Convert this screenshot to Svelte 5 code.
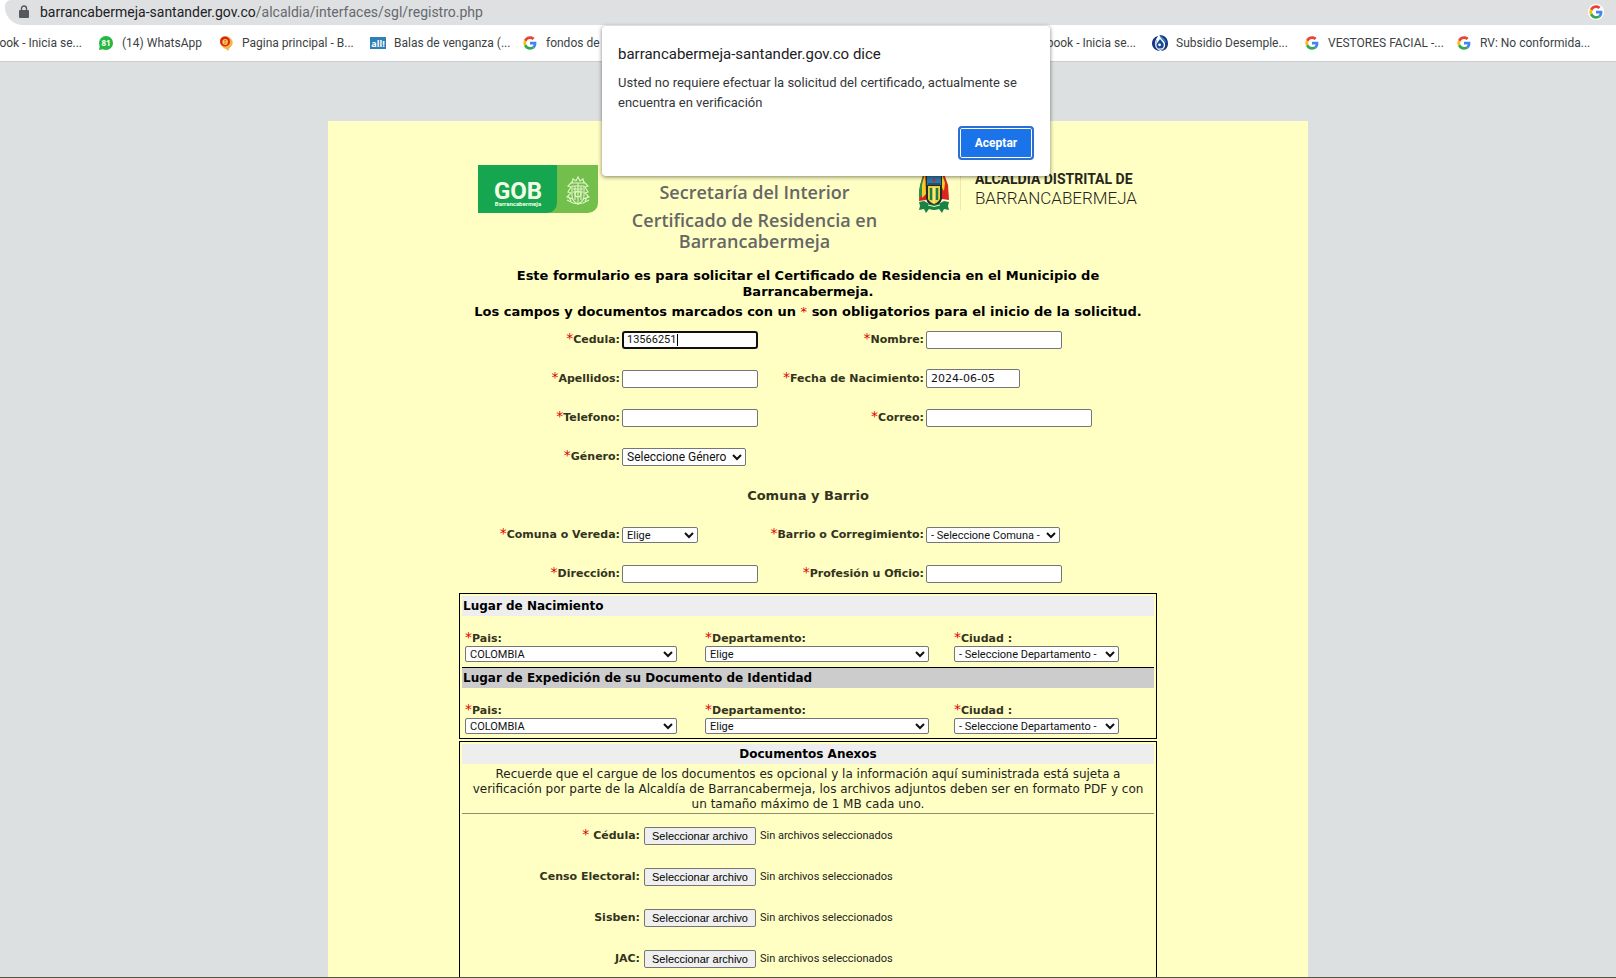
<script>
  const leftMarks = [
    { icon: 'whatsapp', text: '(14) WhatsApp', short: true },
    { icon: 'flame', text: 'Pagina principal - B...' },
    { icon: 'all', text: 'Balas de venganza (...' },
    { icon: 'google', text: 'fondos de', short: true }
  ];
  const rightMarks = [
    { icon: 'drop', text: 'Subsidio Desemple...' },
    { icon: 'google', text: 'VESTORES FACIAL -...' },
    { icon: 'google', text: 'RV: No conformida...' }
  ];
  const places = [
    { id: 'nac', title: 'Lugar de Nacimiento' },
    { id: 'exp', title: 'Lugar de Expedición de su Documento de Identidad' }
  ];
  const files = [
    { id: 'cedula', label: 'Cédula:', required: true },
    { id: 'censo', label: 'Censo Electoral:' },
    { id: 'sisben', label: 'Sisben:' },
    { id: 'jac', label: 'JAC:' }
  ];
  let cedula = $state('13566251');
  let fecha = $state('2024-06-05');
  let open = $state(true);
  let pickers = $state([]);
</script>

{#snippet google()}
  <svg class="icon" viewBox="0 0 48 48" aria-hidden="true">
    <path fill="#ea4335" d="M24 12c3 0 5.700 1 7.800 3l5.800-5.800C34 5.900 29.400 4 24 4 16.200 4 9.400 8.500 6.100 15l6.800 5.200C14.500 15.400 18.900 12 24 12z" />
    <path fill="#4285f4" d="M43.200 24.500c0-1.500-.1-2.900-.4-4.200H24v8.200h10.800c-.5 2.500-1.900 4.600-4 6l6.500 5c3.800-3.500 5.900-8.700 5.900-15z" />
    <path fill="#fbbc05" d="M12.900 27.800A12 12 0 0 1 12.900 20.200L6.100 15a20 20 0 0 0 0 18z" />
    <path fill="#34a853" d="M24 44c5.400 0 9.900-1.800 13.300-4.800l-6.500-5c-1.800 1.200-4.100 1.900-6.800 1.900-5.100 0-9.500-3.500-11.100-8.300L6.100 33C9.400 39.500 16.200 44 24 44z" />
  </svg>
{/snippet}

{#snippet mark(m)}
  <a class="mark" href="#marcador">
    {#if m.icon === 'google'}
      {@render google()}
    {:else if m.icon === 'whatsapp'}
      <svg class="icon" viewBox="0 0 16 16" aria-hidden="true">
        <circle cx="8" cy="8" r="7" fill="#25b83f" /><path d="M1 15l1-5 4 4z" fill="#25b83f" />
        <text x="8" y="11" text-anchor="middle" font-size="8" font-weight="700" fill="#fff">81</text>
      </svg>
    {:else if m.icon === 'flame'}
      <svg class="icon" viewBox="0 0 16 16" aria-hidden="true">
        <path d="M4 2c4-2 9 0 10.500 4 .8 3-1 5.500-3 7L10 16l-2-2C4 13 2 9 2 6c0-2 .5-3 2-4z" fill="#f3b548" />
        <circle cx="7" cy="6.500" r="5" fill="#d9241c" />
        <path d="M5 7h4.300c0-3.200-4.300-3.200-4.300 0 0 2.600 2.800 2.700 4.200 1.200" fill="none" stroke="#ffd34a" stroke-width="1.400" />
      </svg>
    {:else if m.icon === 'all'}
      <svg class="icon" viewBox="0 0 16 16" aria-hidden="true">
        <rect y="2" width="16" height="12" fill="#2e80b8" />
        <text x="8" y="12" text-anchor="middle" font-size="9" font-weight="700" fill="#fff">all!</text>
      </svg>
    {:else}
      <svg class="icon" viewBox="0 0 16 16" aria-hidden="true">
        <path d="M7.500 0C13 0 16 4 16 8.500S13 16 8.500 16C13 14 14 10 12.500 7 11.500 5 9 4 7.500 0z" fill="#15357c" />
        <path d="M7.500 0C10 2 14 4 14.500 9 13 5 9 5 7.500 0z" fill="#2f93d8" />
        <path d="M6 1C2 2 0 5 0 8.500 0 13 4 16 8.500 16 4 14.500 2.500 11 3 7.500 3.300 5 5 3 6 1z" fill="#15357c" />
        <path d="M5 5c-2.500 4.500-.5 9.500 4 9.500 1.500 0 2.800-.6 3.500-1.500" fill="none" stroke="#8fa3c4" stroke-width="1" />
        <path d="M8 4c2 2.500 3.800 4 3.800 6a3.600 3.600 0 0 1-7.200 0C4.600 8 6.500 6.500 8 4z" fill="#174a94" />
        <circle cx="7.600" cy="9.800" r="1.400" fill="#fff" />
      </svg>
    {/if}
    <span class:slot={!m.short}>{m.text}</span>
  </a>
{/snippet}

<div class="window">
  <header class="browser">
    <div class="address">
      <svg class="lock" viewBox="0 0 10 14" aria-hidden="true">
        <rect y="5" width="10" height="8" rx="1" fill="#55585c" />
        <path d="M2.500 6V3.500a2.500 2.500 0 0 1 5 0V6" fill="none" stroke="#55585c" stroke-width="1.400" />
      </svg>
      <span class="url"><b>barrancabermeja-santander.gov.co</b>/alcaldia/interfaces/sgl/registro.php</span>
      <span class="lens">{@render google()}</span>
    </div>
    <nav class="marks" aria-label="Marcadores">
      <div class="group">
        <a class="mark first" href="#marcador">ook - Inicia se...</a>
        {#each leftMarks as m}{@render mark(m)}{/each}
      </div>
      <div class="group">
        <a class="mark" href="#marcador">book - Inicia se...</a>
        {#each rightMarks as m}{@render mark(m)}{/each}
      </div>
    </nav>
  </header>

  <main class="viewport">
    <form class="sheet">
      <div class="content">
        <div class="banner">
          <svg class="gob" viewBox="0 0 120 48" role="img" aria-label="GOB Barrancabermeja">
            <path d="M60 0h60v38a10 10 0 0 1-10 10H60z" fill="#72bf4b" />
            <path d="M0 0h79v38a10 10 0 0 1-10 10H0z" fill="#17a650" />
            <text class="gobname" x="40" y="34" text-anchor="middle" font-size="24" font-weight="700" fill="#f4ffe8">GOB</text>
            <text class="gobname" x="40" y="41" text-anchor="middle" font-size="6" font-weight="700" fill="#f4ffe8">Barrancabermeja</text>
            <g fill="none" stroke="#e2f5c8" stroke-width="1.100">
              <path d="M94 18l1-4 3 2 2-4 2 4 3-2 1 4z M94 21h12v10q0 5-6 8-6-3-6-8z M95 24h10M95 27h10M100 18v20M97 21v14M103 21v14" />
              <path d="M94 17l-4 4 3 1-3 5 3 1-4 4 6 2M106 17l4 4-3 1 3 5-3 1 4 4-6 2M89 35l6 3 5 1 5-1 6-3M90 31l3 5M110 31l-3 5" />
              <circle cx="100" cy="29" r="3" />
            </g>
          </svg>
          <div class="titles">
            <h2>Secretaría del Interior</h2>
            <h2>Certificado de Residencia en Barrancabermeja</h2>
          </div>
          <div class="mayor">
            <svg class="crest" viewBox="0 0 34 48" aria-hidden="true">
              <path d="M8 6L3 20 2 36l7-1 1-27z" fill="#d8251f" />
              <path d="M6 9L2 25v9l4-5z" fill="#2e8f46" /><path d="M8 8L5 20l0 13 4-4z" fill="#f3cf22" />
              <path d="M26 6l5 14 1 15-7-1-1-26z" fill="#d8251f" />
              <path d="M25 8l3 10-1 8-2-3z" fill="#f3cf22" />
              <path d="M9 6h16v28q-2 6-8 7-6-1-8-7z" fill="#242a2d" />
              <path d="M10 8h14v12H10z" fill="#2a78a8" /><path d="M11 21h12v13q-2 4-6 5-4-1-6-5z" fill="#e6d53c" />
              <path d="M16 13l3 2-3 3z" fill="#d8251f" /><path d="M11 19h12" stroke="#242a2d" />
              <path d="M14 23v12M20 23v12" stroke="#247b48" stroke-width="2.400" /><path d="M17 22v16" stroke="#fffbe0" />
              <path d="M2 37l5-1q10 7 20 0l5 1-1 4 1 4-5-1-2 4-3-4q-5 2-10 0l-3 4-2-4-5 1 1-4z" fill="#188247" />
              <path d="M11 40q6 3 12 0" fill="none" stroke="#e9f3b4" />
            </svg>
            <span class="rule"></span>
            <p><strong>ALCALDÍA DISTRITAL DE</strong><span>BARRANCABERMEJA</span></p>
          </div>
        </div>

        <div class="intro">
          <p>Este formulario es para solicitar el Certificado de Residencia en el Municipio de Barrancabermeja.</p>
          <p>Los campos y documentos marcados con un <i>*</i> son obligatorios para el inicio de la solicitud.</p>
        </div>

        <div class="fields">
          <label for="cedula"><i>*</i>Cedula:</label>
          <input id="cedula" class="focused" bind:value={cedula} />
          <label for="nombre"><i>*</i>Nombre:</label>
          <input id="nombre" />
          <label for="apellidos"><i>*</i>Apellidos:</label>
          <input id="apellidos" />
          <label for="fecha"><i>*</i>Fecha de Nacimiento:</label>
          <input id="fecha" class="date" bind:value={fecha} />
          <label for="telefono"><i>*</i>Telefono:</label>
          <input id="telefono" />
          <label for="correo"><i>*</i>Correo:</label>
          <input id="correo" class="wide" />
          <label for="genero"><i>*</i>Género:</label>
          <select id="genero" class="gender"><option>Seleccione Género</option></select>
          <h3>Comuna y Barrio</h3>
          <label for="comuna"><i>*</i>Comuna o Vereda:</label>
          <select id="comuna" class="short"><option>Elige</option></select>
          <label for="barrio"><i>*</i>Barrio o Corregimiento:</label>
          <select id="barrio" class="area"><option>- Seleccione Comuna -</option></select>
          <label for="direccion"><i>*</i>Dirección:</label>
          <input id="direccion" />
          <label for="profesion"><i>*</i>Profesión u Oficio:</label>
          <input id="profesion" />
        </div>

        <section class="box">
          {#each places as p}
            <h4 class:dark={p.id === 'exp'}>{p.title}</h4>
            <div class="place">
              <div>
                <label for="{p.id}-pais"><i>*</i>Pais:</label>
                <select id="{p.id}-pais"><option>COLOMBIA</option></select>
              </div>
              <div>
                <label for="{p.id}-dep"><i>*</i>Departamento:</label>
                <select id="{p.id}-dep"><option>Elige</option></select>
              </div>
              <div>
                <label for="{p.id}-ciudad"><i>*</i>Ciudad :</label>
                <select id="{p.id}-ciudad"><option>- Seleccione Departamento -</option></select>
              </div>
            </div>
          {/each}
        </section>

        <section class="box">
          <h4 class="center">Documentos Anexos</h4>
          <p class="note">Recuerde que el cargue de los documentos es opcional y la información aquí suministrada está sujeta a verificación por parte de la Alcaldía de Barrancabermeja, los archivos adjuntos deben ser en formato PDF y con un tamaño máximo de 1 MB cada uno.</p>
          <div class="files">
            {#each files as f, n}
              <label for="f-{f.id}">{#if f.required}<i>*</i>&nbsp;{/if}{f.label}</label>
              <div class="file">
                <input type="file" hidden bind:this={pickers[n]} />
                <button id="f-{f.id}" type="button" onclick={() => pickers[n].click()}>Seleccionar archivo</button>
                <span>Sin archivos seleccionados</span>
              </div>
            {/each}
          </div>
        </section>
      </div>
    </form>
  </main>
  <div class="edge"></div>

  {#if open}
    <div class="overlay">
      <div class="dialog" role="alertdialog" aria-labelledby="dlg-title" aria-describedby="dlg-text">
        <h1 id="dlg-title">barrancabermeja-santander.gov.co dice</h1>
        <p id="dlg-text">Usted no requiere efectuar la solicitud del certificado, actualmente se encuentra en verificación</p>
        <button type="button" onclick={() => (open = false)}>Aceptar</button>
      </div>
    </div>
  {/if}
</div>

<style>
  * { box-sizing: border-box; margin: 0; }
  .window {
    height: 100vh;
    display: flex;
    flex-direction: column;
    overflow: hidden;
    background: #dce0e1;
    font-family: "DejaVu Sans", Verdana, sans-serif;
  }

  .browser { background: #fff; border-bottom: 1px solid #cbcdcf; font-family: Roboto, "Segoe UI", sans-serif; color: #3c3f43; }
  .address {
    display: flex;
    align-items: center;
    height: 25px;
    margin-left: 5px;
    padding: 0 12px 2px 14px;
    background: #dfe0e2;
    border-radius: 6px 0 0 18px;
  }
  .lock { width: 10px; height: 14px; }
  .url { flex: 1; margin-left: 11px; font-size: 14px; line-height: 22px; color: #66696d; white-space: nowrap; }
  .url b { font-weight: 400; color: #202124; }
  .lens { display: flex; border-radius: 50%; background: #fff; }
  .marks { display: flex; justify-content: space-between; height: 36px; padding-right: 24px; }
  .group { display: flex; align-items: center; gap: 16px; }
  .mark { display: flex; align-items: center; gap: 8px; font-size: 12px; line-height: 18px; color: #3c3f43; text-decoration: none; white-space: nowrap; }
  .first { width: 82px; justify-content: flex-end; }
  .slot { width: 112px; }
  .icon { display: block; width: 16px; height: 16px; flex: none; font-family: "Open Sans", sans-serif; }

  .viewport { flex: 1; min-height: 0; overflow: hidden; padding: 59px 0 0 20px; }
  .sheet { width: 62%; min-width: 760px; max-width: 980px; min-height: 1200px; margin: 0 auto; padding: 44px 20px 40px 0; background: #ffffc4; }
  .content { width: 698px; max-width: 100%; margin: 0 auto; }

  .banner { display: grid; grid-template-columns: 120px 1fr 220px; gap: 16px; padding: 0 20px 0 19px; height: 96px; }
  .gob { width: 120px; height: 48px; }
  .gobname { font-family: "Roboto", sans-serif; }
  .titles { text-align: center; padding: 17px 6px 0 0; }
  h2 { font: 600 18px/21px "Open Sans", "Trebuchet MS", sans-serif; color: #666; margin-bottom: 7px; }
  .mayor { display: flex; align-items: flex-start; color: #26261c; }
  .crest { width: 34px; height: 48px; flex: none; }
  .rule { width: 1px; height: 40px; margin: 5px 14px 0 9px; background: #efe9ac; }
  .mayor p { display: flex; flex-direction: column; font: 300 17px/19px Roboto, sans-serif; padding-top: 5px; white-space: nowrap; }
  .mayor strong { font-size: 14px; font-weight: 700; }

  i { font-style: normal; font-weight: 400; color: #e00000; }
  .intro { text-align: center; font-weight: 700; font-size: 13px; line-height: 16px; color: #000; padding: 7px 16px 0; }
  .intro p + p { margin: 4px -16px 0; }

  label { font-size: 11px; font-weight: 700; line-height: 14px; color: #333320; }
  label i { font-size: 14px; line-height: 12px; }
  .fields { display: grid; grid-template-columns: 161px 141px 159px 1fr; column-gap: 2px; grid-auto-rows: 39px; align-items: center; }
  .fields label { text-align: right; white-space: nowrap; justify-self: end; }
  h3 { grid-column: 1 / -1; text-align: center; font-size: 13px; line-height: 16px; color: #333320; }

  input, select {
    height: 18px;
    width: 136px;
    padding: 0 4px;
    border: 1px solid #767676;
    border-radius: 2px;
    background: #fff;
    color: #111;
    font: 11px/14px Roboto, "Trebuchet MS", sans-serif;
  }
  select { height: 16px; padding: 0; }
  .focused {
    border: 2px solid #101010;
    border-radius: 3px;
    padding: 0 3px;
    background: linear-gradient(#000, #000) 53px 1px / 1px 12px no-repeat #fff;
  }
  .date { width: 94px; height: 19px; font-family: "DejaVu Sans", Verdana, sans-serif; font-size: 11px; }
  .wide { width: 166px; }
  .gender { width: 124px; height: 18px; font-size: 12px; grid-column: 2 / -1; }
  .short { width: 76px; }
  .area { width: 134px; }

  .box { border: 1px solid #000; padding: 2px; margin-bottom: 2px; }
  h4 { background: #eee; font-size: 12px; line-height: 20px; padding: 0 1px; color: #000; }
  .dark { background: #ccc; border-top: 1px solid #000; }
  .center { text-align: center; }
  .place { display: grid; grid-template-columns: 240px 249px 165px; padding: 15px 3px 5px; }
  .place:last-child { padding-bottom: 2px; }
  .place div { display: flex; flex-direction: column; }
  .place select { width: 165px; }
  .place div:nth-child(1) select { width: 212px; }
  .place div:nth-child(2) select { width: 224px; }
  .note { text-align: center; font-size: 12px; line-height: 15px; color: #222; padding: 3px 4px 1px; border-bottom: 1px solid #8f8f70; }
  .files { display: grid; grid-template-columns: 178px 1fr; column-gap: 4px; grid-auto-rows: 41px; align-items: center; padding-top: 1px; }
  .files label { text-align: right; }
  .file { display: flex; align-items: center; gap: 4px; font: 11px/16px Roboto, "Trebuchet MS", sans-serif; color: #222; }
  .file button { width: 112px; height: 18px; padding: 0; border: 1px solid #767676; border-radius: 2px; background: #efefef; color: #000; font: 11px/14px "Liberation Sans", Arial, sans-serif; white-space: nowrap; }

  .edge { height: 1px; background: #55553f; }

  .overlay { position: absolute; inset: 0; display: flex; justify-content: center; align-items: flex-start; padding: 26px 0 0 36px; font-family: Roboto, "Segoe UI", sans-serif; }
  .dialog { width: 448px; padding: 16px; display: flex; flex-direction: column; background: #fff; border-radius: 4px; box-shadow: 0 1px 4px rgba(0, 0, 0, 0.5); color: #202124; }
  h1 { font-size: 15px; font-weight: 400; line-height: 24px; }
  .dialog p { font-size: 13px; line-height: 20px; color: #35363a; margin: 7px 0 13px; }
  .dialog button { align-self: flex-end; width: 76px; height: 34px; border: 2px solid #2b6fd0; border-radius: 4px; background: #1a73e8; box-shadow: inset 0 0 0 1px #fff; color: #fff; font: 700 12px/16px Roboto, sans-serif; }
</style>
